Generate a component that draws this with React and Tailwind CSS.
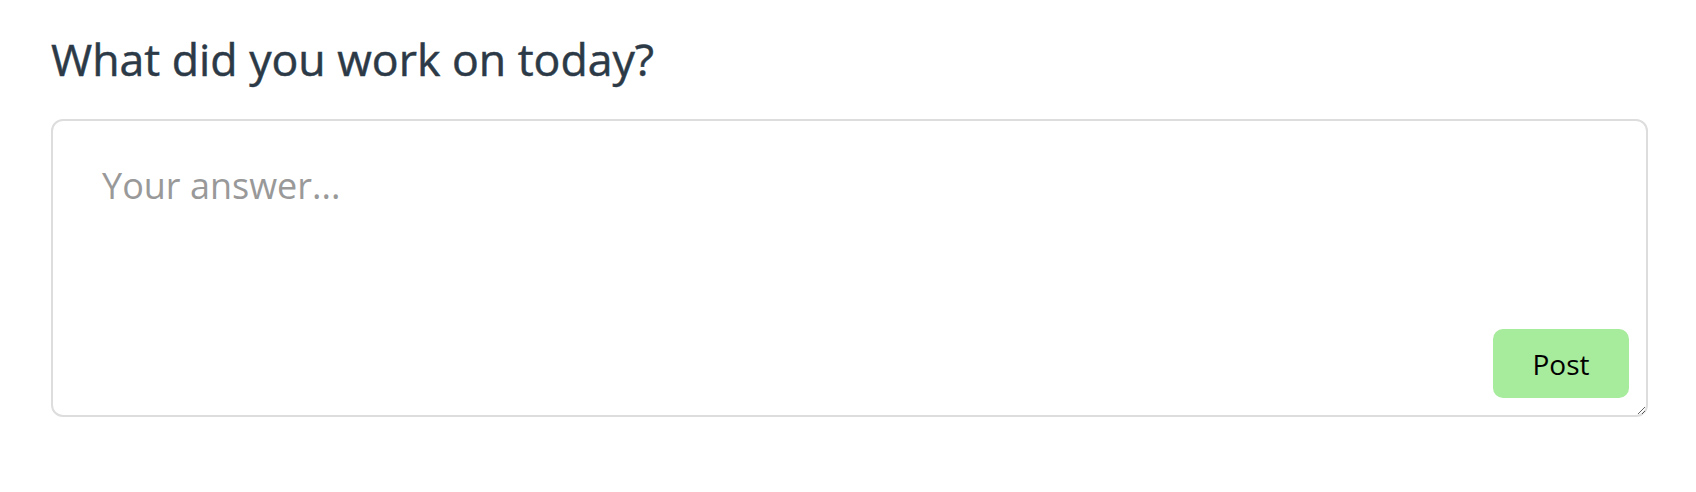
import { useState } from 'react';

export default function App() {
  const [answer, setAnswer] = useState('');

  return (
    <div className="min-h-screen bg-white pl-[51px] pr-[48px] pt-[28px]" style={{ fontFamily: '"Open Sans", "Noto Sans", sans-serif' }}>
      <h1 className="text-[44.6px] leading-[61px] text-[#2c3a47] font-normal [-webkit-text-stroke:0.5px_#2c3a47]">What did you work on today?</h1>
      <div className="relative mt-[30px]">
        <textarea
          value={answer}
          onChange={e => setAnswer(e.target.value)}
          placeholder="Your answer..."
          className="block w-full h-[298px] rounded-[12px] border-2 border-[#dddddd] px-[49px] pt-[40px] pb-[20px] text-[36px] leading-[49px] text-[#333] placeholder:text-[#999999] outline-none resize-y"
        />
        <button className="absolute right-[19px] bottom-[19px] w-[136px] h-[69px] rounded-[10px] bg-[#a7eb9c] text-[28px] text-black">
          Post
        </button>
      </div>
    </div>
  );
}
